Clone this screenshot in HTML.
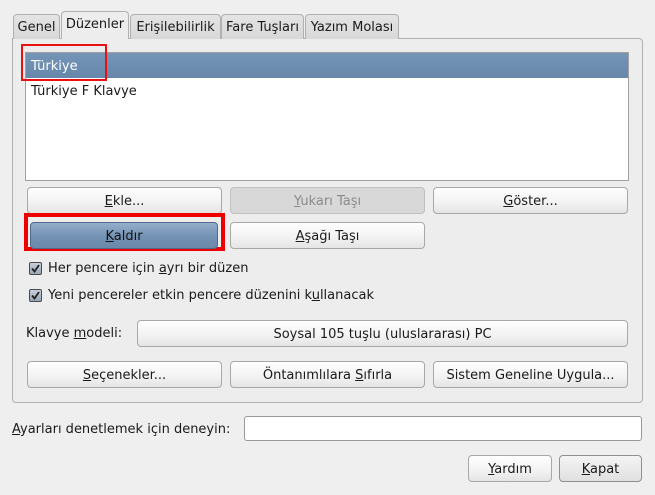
<!DOCTYPE html>
<html><head><meta charset="utf-8"><style>
*{box-sizing:border-box;margin:0;padding:0}
body{width:655px;height:495px;background:#efefef;font-family:"DejaVu Sans","Liberation Sans",sans-serif;font-size:13px;color:#1a1a1a;position:relative;overflow:hidden}
.a{position:absolute}
.tab{position:absolute;top:14px;height:25px;border:1px solid #b0b0b0;border-bottom:none;border-radius:4px 4px 0 0;background:linear-gradient(#e4e4e4,#d8d8d8);text-align:center;line-height:26px;white-space:nowrap}
.btn{position:absolute;height:27px;border:1px solid #a8a8a8;border-radius:4px;background:linear-gradient(#fefefe,#f2f2f2 60%,#e4e4e4);text-align:center;line-height:27px;white-space:nowrap}
.dis{background:#d8d8d8;color:#8a8a8a;border-color:#c0c0c0}
u{text-decoration:underline}
.cb{position:absolute;width:13px;height:13px;border:1px solid #4a4a4a;border-radius:2px;background:linear-gradient(#c8d0da,#9aa6b4)}
</style></head><body>
<div class="a" style="left:12px;top:38px;width:631px;height:365px;border:1px solid #b0b0b0;border-radius:0 4px 4px 4px;background:#ededed"></div>
<div class="tab" style="left:13px;width:47px">Genel</div>
<div class="tab" style="left:61px;top:11px;height:28px;width:68px;background:#ededed;line-height:25px">Düzenler</div>
<div class="tab" style="left:130px;width:91px">Erişilebilirlik</div>
<div class="tab" style="left:221px;width:83px">Fare Tuşları</div>
<div class="tab" style="left:305px;width:94px">Yazım Molası</div>
<div class="a" style="left:62px;top:37px;width:66px;height:3px;background:#ededed"></div>

<div class="a" style="left:25px;top:52px;width:604px;height:129px;border:1px solid #a0a0a0;background:#fff"></div>
<div class="a" style="left:26px;top:53px;width:602px;height:25px;background:linear-gradient(#7595b8,#6787aa);color:#fff;line-height:28px;padding-left:5px">Türkiye</div>
<div class="a" style="left:31px;top:83px;line-height:18px">Türkiye F Klavye</div>
<div class="a" style="left:21px;top:44px;width:86px;height:37px;border:2px solid #e81010"></div>

<div class="btn" style="left:27px;top:187px;width:195px"><u>E</u>kle...</div>
<div class="btn dis" style="left:230px;top:187px;width:195px"><u>Y</u>ukarı Taşı</div>
<div class="btn" style="left:433px;top:187px;width:195px"><u>G</u>öster...</div>
<div class="a" style="left:24px;top:213px;width:201px;height:38px;border:4px solid #ee0000"></div>
<div class="btn" style="left:30px;top:222px;width:188px;background:linear-gradient(#94aecb,#7391b3 55%,#6a88aa);border-color:#50698a;color:#111"><u>K</u>aldır</div>
<div class="btn" style="left:230px;top:222px;width:195px"><u>A</u>şağı Taşı</div>

<div class="cb" style="left:29px;top:262px"></div>
<svg class="a" style="left:29px;top:262px" width="13" height="13"><path d="M3 6.5 L5.5 9.5 L10 3" stroke="#222" stroke-width="1.8" fill="none"/></svg>
<div class="a" style="left:48px;top:261px">Her pencere için <u>a</u>yrı bir düzen</div>
<div class="cb" style="left:29px;top:289px"></div>
<svg class="a" style="left:29px;top:289px" width="13" height="13"><path d="M3 6.5 L5.5 9.5 L10 3" stroke="#222" stroke-width="1.8" fill="none"/></svg>
<div class="a" style="left:48px;top:288px">Yeni pencereler etkin pencere düzenini k<u>u</u>llanacak</div>

<div class="a" style="left:26px;top:326px">Klavye <u>m</u>odeli:</div>
<div class="btn" style="left:137px;top:320px;width:491px">Soysal 105 tuşlu (uluslararası) PC</div>
<div class="btn" style="left:27px;top:361px;width:195px"><u>S</u>eçenekler...</div>
<div class="btn" style="left:230px;top:361px;width:195px">Öntanımlılara <u>S</u>ıfırla</div>
<div class="btn" style="left:433px;top:361px;width:195px">Sistem Geneline Uygula...</div>

<div class="a" style="left:12px;top:422px"><u>A</u>yarları denetlemek için deneyin:</div>
<div class="a" style="left:244px;top:416px;width:398px;height:25px;border:1px solid #999;border-radius:3px;background:#fff"></div>
<div class="btn" style="left:468px;top:455px;width:84px"><u>Y</u>ardım</div>
<div class="btn" style="left:559px;top:455px;width:83px;background:linear-gradient(#f4f4f4,#e0e0e0);border-color:#909090"><u>K</u>apat</div>
</body></html>
